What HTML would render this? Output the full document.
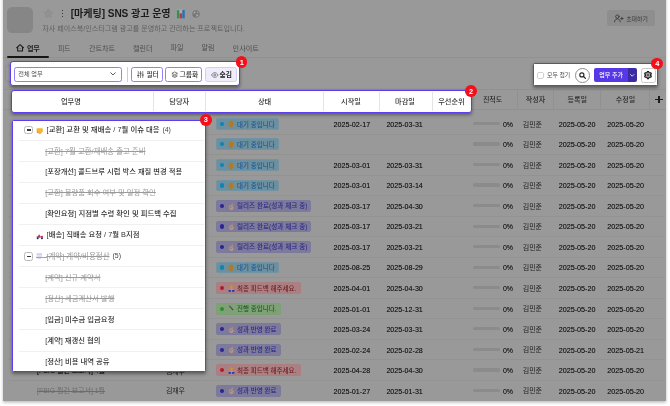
<!DOCTYPE html>
<html lang="ko"><head><meta charset="utf-8"><title>SNS 광고 운영</title><style>
html,body{margin:0;padding:0;background:#fff;}
body{width:670px;height:406px;overflow:hidden;position:relative;font-family:"Liberation Sans","Noto Sans CJK KR",sans-serif;font-size:7.2px;color:#222;-webkit-text-size-adjust:none;}
.t{position:absolute;white-space:nowrap;line-height:1;}
svg{display:block;overflow:visible;}
#root{position:absolute;left:0;top:0;width:670px;height:406px;will-change:transform;}
</style></head><body>
<div id="root">
<div class="" style="position:absolute;left:2.60px;top:-6.00px;width:663.20px;height:406.70px;background:#999999;box-shadow:0 1.5px 3px rgba(0,0,0,.28);"></div>
<div class="" style="position:absolute;left:7.00px;top:7.00px;width:25.60px;height:25.50px;background:#868686;border-radius:5.5px;"></div>
<svg style="position:absolute;left:42.6px;top:7.6px" width="10.8" height="10.8" viewBox="0 0 24 24"><path d="M12 2.2l3 6.300 6.900.900-5.100 4.700 1.300 6.800L12 17.600 5.900 20.900l1.300-6.800-5.100-4.700 6.900-.900z" fill="#929292" stroke="#8b8b8b" stroke-width="1.600" stroke-linejoin="round"/></svg>
<div class="" style="position:absolute;left:61.50px;top:9.55px;width:1.90px;height:1.90px;background:#161616;border-radius:50%;"></div>
<div class="" style="position:absolute;left:61.50px;top:12.55px;width:1.90px;height:1.90px;background:#161616;border-radius:50%;"></div>
<div class="" style="position:absolute;left:61.50px;top:15.55px;width:1.90px;height:1.90px;background:#161616;border-radius:50%;"></div>
<span class="t" id="t1" style="top:8.81px;left:70.80px;font-size:10.09px;font-weight:700;letter-spacing:-0.064px;color:#1c1c1c;">[마케팅] SNS 광고 운영</span>
<svg style="position:absolute;left:176px;top:9px" width="9.6" height="9.9" viewBox="0 0 9.6 9.9"><rect x="0" y="0" width="9.6" height="9.9" rx="0.8" fill="#8e9aa0"/><rect x="0.5" y="0.5" width="8.6" height="8.9" fill="#a7adb0"/><rect x="0.8" y="1.2" width="2.5" height="8.2" fill="#3f8a50"/><rect x="3.6" y="4.4" width="2.4" height="5" fill="#b53a3a"/><rect x="6.3" y="0.9" width="2.5" height="8.500" fill="#2f6fae"/></svg>
<svg style="position:absolute;left:192px;top:9.700px" width="8" height="8" viewBox="0 0 8 8"><circle cx="4" cy="4" r="3.700" fill="#757575"/><path d="M2.200 1.500c1.200-.300 1.800.500 1.500 1.300-.300.900-1.500.700-1.900 1.600-.300-1.100-.300-2.200.400-2.900zM4.300 4.300c.900-.400 2 .100 2.300 1-.400.900-1.200 1.500-2.100 1.700-.600-.800-.800-1.900-.200-2.700zM5 1.200c.900.300 1.600 1 1.900 1.900-.700.200-1.500-.100-1.900-.700-.300-.400-.300-.800 0-1.200z" fill="#a2a2a2"/></svg>
<span class="t" id="t2" style="top:25.91px;left:42.30px;font-size:7.08px;font-weight:400;color:#606060;">자사 페이스북/인스타그램 광고를 운영하고 관리하는 프로젝트입니다.</span>
<div class="" style="position:absolute;left:607.00px;top:10.40px;width:47.80px;height:16.00px;background:#8e8e8e;border-radius:2.5px;"></div>
<svg style="position:absolute;left:613.600px;top:14px" width="9.600" height="8.600" viewBox="0 0 20 18" fill="none" stroke="#3a3a3a" stroke-width="1.900" stroke-linecap="round"><circle cx="7" cy="5.5" r="3.6"/><path d="M1 16.5c0-4 2.6-6 6-6s6 2 6 6"/><path d="M16.5 7v5M14 9.5h5"/></svg>
<span class="t" id="t3" style="top:17.09px;left:626.20px;font-size:5.92px;font-weight:400;color:#3a3a3a;">초대하기</span>
<svg style="position:absolute;left:16.100px;top:43.900px" width="8.200" height="7.700" viewBox="0 0 16 15" fill="none" stroke="#1a1a1a" stroke-width="2.100" stroke-linejoin="round" stroke-linecap="round"><path d="M1.200 7.400L8 1.300l6.800 6.100"/><path d="M3.300 6.200v7.600h9.400V6.200"/><circle cx="8" cy="9.300" r="0.900" fill="#1a1a1a" stroke="none"/></svg>
<span class="t" id="t4" style="top:46.21px;left:26.90px;font-size:7.08px;font-weight:700;letter-spacing:-0.067px;color:#1c1c1c;">업무</span>
<span class="t" id="t5" style="top:44.51px;left:58.10px;font-size:6.98px;font-weight:400;letter-spacing:-0.419px;color:#4e4e4e;">피드</span>
<span class="t" id="t6" style="top:46.21px;left:89.00px;font-size:7.08px;font-weight:400;color:#4e4e4e;">간트차트</span>
<span class="t" id="t7" style="top:46.21px;left:133.00px;font-size:7.08px;font-weight:400;color:#4e4e4e;">캘린더</span>
<span class="t" id="t8" style="top:44.46px;left:170.60px;font-size:7.07px;font-weight:400;color:#4e4e4e;">파일</span>
<span class="t" id="t9" style="top:44.46px;left:201.60px;font-size:7.07px;font-weight:400;color:#4e4e4e;">알림</span>
<span class="t" id="t10" style="top:46.18px;left:232.60px;font-size:7.13px;font-weight:400;color:#4e4e4e;">인사이트</span>
<div class="" style="position:absolute;left:3.00px;top:57.00px;width:662.50px;height:0.80px;background:#919191;"></div>
<div class="" style="position:absolute;left:7.20px;top:56.20px;width:41.50px;height:1.70px;background:#161616;border-radius:1px;"></div>
<div class="" style="position:absolute;left:3.00px;top:88.70px;width:662.50px;height:0.80px;background:#919191;"></div>
<div class="" style="position:absolute;left:3.00px;top:108.80px;width:662.50px;height:0.80px;background:#919191;"></div>
<div class="" style="position:absolute;left:517.40px;top:89.10px;width:0.80px;height:20.00px;background:#919191;"></div>
<div class="" style="position:absolute;left:553.40px;top:89.10px;width:0.80px;height:20.00px;background:#919191;"></div>
<div class="" style="position:absolute;left:600.40px;top:89.10px;width:0.80px;height:20.00px;background:#919191;"></div>
<div class="" style="position:absolute;left:649.20px;top:89.10px;width:0.80px;height:20.00px;background:#919191;"></div>
<span class="t" id="t11" style="top:96.08px;left:482.90px;font-size:7.04px;font-weight:500;color:#2a2a2a;">진척도</span>
<span class="t" id="t12" style="top:97.06px;left:525.80px;font-size:7.08px;font-weight:500;color:#2a2a2a;">작성자</span>
<span class="t" id="t13" style="top:97.06px;left:567.50px;font-size:7.08px;font-weight:500;color:#2a2a2a;">등록일</span>
<span class="t" id="t14" style="top:96.10px;left:615.80px;font-size:7.00px;font-weight:500;color:#2a2a2a;">수정일</span>
<div class="" style="position:absolute;left:655.40px;top:98.90px;width:7.20px;height:1.20px;background:#1c1c1c;"></div>
<div class="" style="position:absolute;left:658.40px;top:95.90px;width:1.20px;height:7.20px;background:#1c1c1c;"></div>
<div class="" style="position:absolute;left:8.50px;top:133.53px;width:656.00px;height:0.80px;background:#929292;"></div>
<div class="" style="position:absolute;left:8.50px;top:154.06px;width:656.00px;height:0.80px;background:#929292;"></div>
<div class="" style="position:absolute;left:8.50px;top:174.59px;width:656.00px;height:0.80px;background:#929292;"></div>
<div class="" style="position:absolute;left:8.50px;top:195.12px;width:656.00px;height:0.80px;background:#929292;"></div>
<div class="" style="position:absolute;left:8.50px;top:215.65px;width:656.00px;height:0.80px;background:#929292;"></div>
<div class="" style="position:absolute;left:8.50px;top:236.18px;width:656.00px;height:0.80px;background:#929292;"></div>
<div class="" style="position:absolute;left:8.50px;top:256.71px;width:656.00px;height:0.80px;background:#929292;"></div>
<div class="" style="position:absolute;left:8.50px;top:277.24px;width:656.00px;height:0.80px;background:#929292;"></div>
<div class="" style="position:absolute;left:8.50px;top:297.77px;width:656.00px;height:0.80px;background:#929292;"></div>
<div class="" style="position:absolute;left:8.50px;top:318.30px;width:656.00px;height:0.80px;background:#929292;"></div>
<div class="" style="position:absolute;left:8.50px;top:338.83px;width:656.00px;height:0.80px;background:#929292;"></div>
<div class="" style="position:absolute;left:8.50px;top:359.36px;width:656.00px;height:0.80px;background:#929292;"></div>
<div class="" style="position:absolute;left:8.50px;top:379.89px;width:656.00px;height:0.80px;background:#929292;"></div>
<div class="" style="position:absolute;left:215.90px;top:117.95px;width:63.20px;height:11.80px;box-sizing:border-box;background:#6e8f9e;border:0.6px solid #7194a5;border-radius:2px;"></div>
<div class="" style="position:absolute;left:219.90px;top:121.75px;width:4.20px;height:4.20px;background:#0b84b6;border-radius:50%;"></div>
<svg style="position:absolute;left:227.80px;top:120.45px" width="6" height="7.4" viewBox="0 0 12 15"><path d="M2 6.5V3.2a1 1 0 0 1 2 0V2a1 1 0 0 1 2 0v-.3a1 1 0 0 1 2 0V2.6a1 1 0 0 1 2 0V9c0 3.4-1.8 5.6-4.6 5.6C3.4 14.600 2.600 13 1.400 10.400L.5 8.400c-.4-1 .7-1.600 1.500-.9z" fill="#b27a22"/></svg>
<span class="t" id="t15" style="top:122.05px;left:237.00px;font-size:6.49px;font-weight:500;color:#1d5a94;">대기 중입니다</span>
<span class="t" id="t16" style="top:120.90px;left:333.40px;font-size:7.20px;font-weight:400;color:#181818;text-shadow:0 0 0.6px rgba(20,20,20,.55);">2025-02-17</span>
<span class="t" id="t17" style="top:121.94px;left:386.40px;font-size:7.13px;font-weight:400;color:#181818;text-shadow:0 0 0.6px rgba(20,20,20,.55);">2025-03-31</span>
<div class="" style="position:absolute;left:472.90px;top:121.90px;width:27.50px;height:3.30px;background:#8b8b8b;border-radius:1.65px;"></div>
<span class="t" id="t18" style="top:121.01px;left:503.00px;font-size:6.98px;font-weight:400;letter-spacing:-0.139px;color:#181818;text-shadow:0 0 0.6px rgba(20,20,20,.55);">0%</span>
<span class="t" id="t19" style="top:120.78px;left:522.70px;font-size:7.04px;font-weight:400;color:#1e1e1e;">김민준</span>
<span class="t" id="t20" style="top:120.90px;left:558.70px;font-size:7.20px;font-weight:400;color:#181818;text-shadow:0 0 0.6px rgba(20,20,20,.55);">2025-05-20</span>
<span class="t" id="t21" style="top:120.90px;left:607.30px;font-size:7.20px;font-weight:400;color:#181818;text-shadow:0 0 0.6px rgba(20,20,20,.55);">2025-05-20</span>
<div class="" style="position:absolute;left:215.90px;top:138.48px;width:63.20px;height:11.80px;box-sizing:border-box;background:#6e8f9e;border:0.6px solid #7194a5;border-radius:2px;"></div>
<div class="" style="position:absolute;left:219.90px;top:142.28px;width:4.20px;height:4.20px;background:#0b84b6;border-radius:50%;"></div>
<svg style="position:absolute;left:227.80px;top:140.98px" width="6" height="7.4" viewBox="0 0 12 15"><path d="M2 6.5V3.2a1 1 0 0 1 2 0V2a1 1 0 0 1 2 0v-.3a1 1 0 0 1 2 0V2.6a1 1 0 0 1 2 0V9c0 3.4-1.8 5.6-4.6 5.6C3.4 14.600 2.600 13 1.400 10.400L.5 8.400c-.4-1 .7-1.600 1.500-.9z" fill="#b27a22"/></svg>
<span class="t" id="t22" style="top:142.08px;left:237.00px;font-size:6.49px;font-weight:500;color:#1d5a94;">대기 중입니다</span>
<div class="" style="position:absolute;left:472.90px;top:142.43px;width:27.50px;height:3.30px;background:#8b8b8b;border-radius:1.65px;"></div>
<span class="t" id="t23" style="top:141.04px;left:503.00px;font-size:6.98px;font-weight:400;letter-spacing:-0.139px;color:#181818;text-shadow:0 0 0.6px rgba(20,20,20,.55);">0%</span>
<span class="t" id="t24" style="top:141.06px;left:522.70px;font-size:7.04px;font-weight:400;color:#1e1e1e;">김민준</span>
<span class="t" id="t25" style="top:141.18px;left:558.70px;font-size:7.20px;font-weight:400;color:#181818;text-shadow:0 0 0.6px rgba(20,20,20,.55);">2025-05-20</span>
<span class="t" id="t26" style="top:141.18px;left:607.30px;font-size:7.20px;font-weight:400;color:#181818;text-shadow:0 0 0.6px rgba(20,20,20,.55);">2025-05-20</span>
<div class="" style="position:absolute;left:215.90px;top:159.01px;width:63.20px;height:11.80px;box-sizing:border-box;background:#6e8f9e;border:0.6px solid #7194a5;border-radius:2px;"></div>
<div class="" style="position:absolute;left:219.90px;top:162.81px;width:4.20px;height:4.20px;background:#0b84b6;border-radius:50%;"></div>
<svg style="position:absolute;left:227.80px;top:161.51px" width="6" height="7.4" viewBox="0 0 12 15"><path d="M2 6.5V3.2a1 1 0 0 1 2 0V2a1 1 0 0 1 2 0v-.3a1 1 0 0 1 2 0V2.6a1 1 0 0 1 2 0V9c0 3.4-1.8 5.6-4.6 5.6C3.4 14.600 2.600 13 1.400 10.400L.5 8.400c-.4-1 .7-1.600 1.500-.9z" fill="#b27a22"/></svg>
<span class="t" id="t27" style="top:163.11px;left:237.00px;font-size:6.49px;font-weight:500;color:#1d5a94;">대기 중입니다</span>
<span class="t" id="t28" style="top:161.96px;left:333.40px;font-size:7.20px;font-weight:400;color:#181818;text-shadow:0 0 0.6px rgba(20,20,20,.55);">2025-03-01</span>
<span class="t" id="t29" style="top:163.00px;left:386.40px;font-size:7.13px;font-weight:400;color:#181818;text-shadow:0 0 0.6px rgba(20,20,20,.55);">2025-03-31</span>
<div class="" style="position:absolute;left:472.90px;top:162.96px;width:27.50px;height:3.30px;background:#8b8b8b;border-radius:1.65px;"></div>
<span class="t" id="t30" style="top:162.07px;left:503.00px;font-size:6.98px;font-weight:400;letter-spacing:-0.139px;color:#181818;text-shadow:0 0 0.6px rgba(20,20,20,.55);">0%</span>
<span class="t" id="t31" style="top:161.84px;left:522.70px;font-size:7.04px;font-weight:400;color:#1e1e1e;">김민준</span>
<span class="t" id="t32" style="top:161.96px;left:558.70px;font-size:7.20px;font-weight:400;color:#181818;text-shadow:0 0 0.6px rgba(20,20,20,.55);">2025-05-20</span>
<span class="t" id="t33" style="top:161.96px;left:607.30px;font-size:7.20px;font-weight:400;color:#181818;text-shadow:0 0 0.6px rgba(20,20,20,.55);">2025-05-20</span>
<div class="" style="position:absolute;left:215.90px;top:179.54px;width:63.20px;height:11.80px;box-sizing:border-box;background:#6e8f9e;border:0.6px solid #7194a5;border-radius:2px;"></div>
<div class="" style="position:absolute;left:219.90px;top:183.34px;width:4.20px;height:4.20px;background:#0b84b6;border-radius:50%;"></div>
<svg style="position:absolute;left:227.80px;top:182.04px" width="6" height="7.4" viewBox="0 0 12 15"><path d="M2 6.5V3.2a1 1 0 0 1 2 0V2a1 1 0 0 1 2 0v-.3a1 1 0 0 1 2 0V2.6a1 1 0 0 1 2 0V9c0 3.4-1.8 5.6-4.6 5.6C3.4 14.600 2.600 13 1.400 10.400L.5 8.400c-.4-1 .7-1.600 1.500-.9z" fill="#b27a22"/></svg>
<span class="t" id="t34" style="top:183.14px;left:237.00px;font-size:6.49px;font-weight:500;color:#1d5a94;">대기 중입니다</span>
<span class="t" id="t35" style="top:182.24px;left:333.40px;font-size:7.20px;font-weight:400;color:#181818;text-shadow:0 0 0.6px rgba(20,20,20,.55);">2025-03-01</span>
<span class="t" id="t36" style="top:183.03px;left:386.40px;font-size:7.13px;font-weight:400;color:#181818;text-shadow:0 0 0.6px rgba(20,20,20,.55);">2025-03-14</span>
<div class="" style="position:absolute;left:472.90px;top:183.49px;width:27.50px;height:3.30px;background:#8b8b8b;border-radius:1.65px;"></div>
<span class="t" id="t37" style="top:182.10px;left:503.00px;font-size:6.98px;font-weight:400;letter-spacing:-0.139px;color:#181818;text-shadow:0 0 0.6px rgba(20,20,20,.55);">0%</span>
<span class="t" id="t38" style="top:182.12px;left:522.70px;font-size:7.04px;font-weight:400;color:#1e1e1e;">김민준</span>
<span class="t" id="t39" style="top:182.24px;left:558.70px;font-size:7.20px;font-weight:400;color:#181818;text-shadow:0 0 0.6px rgba(20,20,20,.55);">2025-05-20</span>
<span class="t" id="t40" style="top:182.24px;left:607.30px;font-size:7.20px;font-weight:400;color:#181818;text-shadow:0 0 0.6px rgba(20,20,20,.55);">2025-05-20</span>
<div class="" style="position:absolute;left:215.90px;top:200.07px;width:95.10px;height:11.80px;box-sizing:border-box;background:#7d7a9a;border:0.6px solid #7c799e;border-radius:2px;"></div>
<div class="" style="position:absolute;left:219.90px;top:203.87px;width:4.20px;height:4.20px;background:#2a2494;border-radius:50%;"></div>
<svg style="position:absolute;left:227.80px;top:202.57px" width="6" height="7.4" viewBox="0 0 12 15"><path d="M3 5.500c1.500-1.200 3-1 3.800.2L7.500 1.500a.9.900 0 0 1 1.800.1l.2 5.400c1.600.4 2.200 1.600 2 3.400-.3 2.600-2 4.200-4.500 4.200-2.700 0-4.600-1.800-5-4.300C1.600 8 1.900 6.500 3 5.500z" fill="#b8917c"/><circle cx="5.300" cy="8.600" r="1.700" fill="#7d7a9a"/></svg>
<span class="t" id="t41" style="top:203.12px;left:237.00px;font-size:6.59px;font-weight:500;color:#2d2987;">릴리즈 완료(성과 체크 중)</span>
<span class="t" id="t42" style="top:203.02px;left:333.40px;font-size:7.20px;font-weight:400;color:#181818;text-shadow:0 0 0.6px rgba(20,20,20,.55);">2025-03-17</span>
<span class="t" id="t43" style="top:204.06px;left:386.40px;font-size:7.13px;font-weight:400;color:#181818;text-shadow:0 0 0.6px rgba(20,20,20,.55);">2025-04-30</span>
<div class="" style="position:absolute;left:472.90px;top:204.02px;width:27.50px;height:3.30px;background:#8b8b8b;border-radius:1.65px;"></div>
<span class="t" id="t44" style="top:203.13px;left:503.00px;font-size:6.98px;font-weight:400;letter-spacing:-0.139px;color:#181818;text-shadow:0 0 0.6px rgba(20,20,20,.55);">0%</span>
<span class="t" id="t45" style="top:202.90px;left:522.70px;font-size:7.04px;font-weight:400;color:#1e1e1e;">김민준</span>
<span class="t" id="t46" style="top:203.02px;left:558.70px;font-size:7.20px;font-weight:400;color:#181818;text-shadow:0 0 0.6px rgba(20,20,20,.55);">2025-05-20</span>
<span class="t" id="t47" style="top:203.02px;left:607.30px;font-size:7.20px;font-weight:400;color:#181818;text-shadow:0 0 0.6px rgba(20,20,20,.55);">2025-05-20</span>
<div class="" style="position:absolute;left:215.90px;top:220.60px;width:95.10px;height:11.80px;box-sizing:border-box;background:#7d7a9a;border:0.6px solid #7c799e;border-radius:2px;"></div>
<div class="" style="position:absolute;left:219.90px;top:224.40px;width:4.20px;height:4.20px;background:#2a2494;border-radius:50%;"></div>
<svg style="position:absolute;left:227.80px;top:223.10px" width="6" height="7.4" viewBox="0 0 12 15"><path d="M3 5.500c1.500-1.200 3-1 3.800.2L7.500 1.500a.9.900 0 0 1 1.800.1l.2 5.400c1.600.4 2.200 1.600 2 3.400-.3 2.600-2 4.200-4.500 4.200-2.700 0-4.600-1.800-5-4.300C1.600 8 1.900 6.500 3 5.500z" fill="#b8917c"/><circle cx="5.300" cy="8.600" r="1.700" fill="#7d7a9a"/></svg>
<span class="t" id="t48" style="top:224.15px;left:237.00px;font-size:6.59px;font-weight:500;color:#2d2987;">릴리즈 완료(성과 체크 중)</span>
<span class="t" id="t49" style="top:223.05px;left:333.40px;font-size:7.20px;font-weight:400;color:#181818;text-shadow:0 0 0.6px rgba(20,20,20,.55);">2025-03-17</span>
<span class="t" id="t50" style="top:224.09px;left:386.40px;font-size:7.13px;font-weight:400;color:#181818;text-shadow:0 0 0.6px rgba(20,20,20,.55);">2025-03-21</span>
<div class="" style="position:absolute;left:472.90px;top:224.55px;width:27.50px;height:3.30px;background:#8b8b8b;border-radius:1.65px;"></div>
<span class="t" id="t51" style="top:223.16px;left:503.00px;font-size:6.98px;font-weight:400;letter-spacing:-0.139px;color:#181818;text-shadow:0 0 0.6px rgba(20,20,20,.55);">0%</span>
<span class="t" id="t52" style="top:223.18px;left:522.70px;font-size:7.04px;font-weight:400;color:#1e1e1e;">김민준</span>
<span class="t" id="t53" style="top:223.05px;left:558.70px;font-size:7.20px;font-weight:400;color:#181818;text-shadow:0 0 0.6px rgba(20,20,20,.55);">2025-05-20</span>
<span class="t" id="t54" style="top:223.05px;left:607.30px;font-size:7.20px;font-weight:400;color:#181818;text-shadow:0 0 0.6px rgba(20,20,20,.55);">2025-05-20</span>
<div class="" style="position:absolute;left:215.90px;top:241.13px;width:95.10px;height:11.80px;box-sizing:border-box;background:#7d7a9a;border:0.6px solid #7c799e;border-radius:2px;"></div>
<div class="" style="position:absolute;left:219.90px;top:244.93px;width:4.20px;height:4.20px;background:#2a2494;border-radius:50%;"></div>
<svg style="position:absolute;left:227.80px;top:243.63px" width="6" height="7.4" viewBox="0 0 12 15"><path d="M3 5.500c1.500-1.200 3-1 3.800.2L7.500 1.500a.9.900 0 0 1 1.800.1l.2 5.400c1.600.4 2.200 1.600 2 3.400-.3 2.600-2 4.200-4.500 4.200-2.700 0-4.600-1.800-5-4.300C1.600 8 1.900 6.500 3 5.500z" fill="#b8917c"/><circle cx="5.300" cy="8.600" r="1.700" fill="#7d7a9a"/></svg>
<span class="t" id="t55" style="top:244.18px;left:237.00px;font-size:6.59px;font-weight:500;color:#2d2987;">릴리즈 완료(성과 체크 중)</span>
<span class="t" id="t56" style="top:244.08px;left:333.40px;font-size:7.20px;font-weight:400;color:#181818;text-shadow:0 0 0.6px rgba(20,20,20,.55);">2025-03-17</span>
<span class="t" id="t57" style="top:245.12px;left:386.40px;font-size:7.13px;font-weight:400;color:#181818;text-shadow:0 0 0.6px rgba(20,20,20,.55);">2025-03-21</span>
<div class="" style="position:absolute;left:472.90px;top:245.08px;width:27.50px;height:3.30px;background:#8b8b8b;border-radius:1.65px;"></div>
<span class="t" id="t58" style="top:244.19px;left:503.00px;font-size:6.98px;font-weight:400;letter-spacing:-0.139px;color:#181818;text-shadow:0 0 0.6px rgba(20,20,20,.55);">0%</span>
<span class="t" id="t59" style="top:243.96px;left:522.70px;font-size:7.04px;font-weight:400;color:#1e1e1e;">김민준</span>
<span class="t" id="t60" style="top:244.08px;left:558.70px;font-size:7.20px;font-weight:400;color:#181818;text-shadow:0 0 0.6px rgba(20,20,20,.55);">2025-05-20</span>
<span class="t" id="t61" style="top:244.08px;left:607.30px;font-size:7.20px;font-weight:400;color:#181818;text-shadow:0 0 0.6px rgba(20,20,20,.55);">2025-05-20</span>
<div class="" style="position:absolute;left:215.90px;top:261.66px;width:63.20px;height:11.80px;box-sizing:border-box;background:#6e8f9e;border:0.6px solid #7194a5;border-radius:2px;"></div>
<div class="" style="position:absolute;left:219.90px;top:265.46px;width:4.20px;height:4.20px;background:#0b84b6;border-radius:50%;"></div>
<svg style="position:absolute;left:227.80px;top:264.16px" width="6" height="7.4" viewBox="0 0 12 15"><path d="M2 6.5V3.2a1 1 0 0 1 2 0V2a1 1 0 0 1 2 0v-.3a1 1 0 0 1 2 0V2.6a1 1 0 0 1 2 0V9c0 3.4-1.8 5.6-4.6 5.6C3.4 14.600 2.600 13 1.400 10.400L.5 8.400c-.4-1 .7-1.600 1.500-.9z" fill="#b27a22"/></svg>
<span class="t" id="t62" style="top:264.76px;left:237.00px;font-size:6.49px;font-weight:500;color:#1d5a94;">대기 중입니다</span>
<span class="t" id="t63" style="top:264.11px;left:333.40px;font-size:7.20px;font-weight:400;color:#181818;text-shadow:0 0 0.6px rgba(20,20,20,.55);">2025-08-25</span>
<span class="t" id="t64" style="top:265.15px;left:386.40px;font-size:7.13px;font-weight:400;color:#181818;text-shadow:0 0 0.6px rgba(20,20,20,.55);">2025-08-29</span>
<div class="" style="position:absolute;left:472.90px;top:265.61px;width:27.50px;height:3.30px;background:#8b8b8b;border-radius:1.65px;"></div>
<span class="t" id="t65" style="top:264.22px;left:503.00px;font-size:6.98px;font-weight:400;letter-spacing:-0.139px;color:#181818;text-shadow:0 0 0.6px rgba(20,20,20,.55);">0%</span>
<span class="t" id="t66" style="top:264.24px;left:522.70px;font-size:7.04px;font-weight:400;color:#1e1e1e;">김민준</span>
<span class="t" id="t67" style="top:264.11px;left:558.70px;font-size:7.20px;font-weight:400;color:#181818;text-shadow:0 0 0.6px rgba(20,20,20,.55);">2025-05-20</span>
<span class="t" id="t68" style="top:264.11px;left:607.30px;font-size:7.20px;font-weight:400;color:#181818;text-shadow:0 0 0.6px rgba(20,20,20,.55);">2025-05-20</span>
<div class="" style="position:absolute;left:215.90px;top:282.19px;width:84.80px;height:11.80px;box-sizing:border-box;background:#ab8083;border:0.6px solid #ad7e81;border-radius:2px;"></div>
<div class="" style="position:absolute;left:219.90px;top:285.99px;width:4.20px;height:4.20px;background:#b8162a;border-radius:50%;"></div>
<svg style="position:absolute;left:227.80px;top:284.89px" width="7" height="7" viewBox="0 0 14 14"><circle cx="7" cy="3.400" r="2.400" fill="#d09a22"/><path d="M3.500 10.500c0-2.600 1.500-4 3.500-4s3.500 1.400 3.500 4z" fill="#d09a22"/><rect x="1" y="10" width="5" height="3.400" rx="1" fill="#2433c0"/><rect x="8" y="10" width="5" height="3.400" rx="1" fill="#2433c0"/></svg>
<span class="t" id="t69" style="top:286.02px;left:237.00px;font-size:6.53px;font-weight:500;color:#6c1f22;">최종 피드백 해주세요.</span>
<span class="t" id="t70" style="top:285.14px;left:333.40px;font-size:7.20px;font-weight:400;color:#181818;text-shadow:0 0 0.6px rgba(20,20,20,.55);">2025-04-01</span>
<span class="t" id="t71" style="top:286.18px;left:386.40px;font-size:7.13px;font-weight:400;color:#181818;text-shadow:0 0 0.6px rgba(20,20,20,.55);">2025-04-30</span>
<div class="" style="position:absolute;left:472.90px;top:286.14px;width:27.50px;height:3.30px;background:#8b8b8b;border-radius:1.65px;"></div>
<span class="t" id="t72" style="top:285.00px;left:503.00px;font-size:6.98px;font-weight:400;letter-spacing:-0.139px;color:#181818;text-shadow:0 0 0.6px rgba(20,20,20,.55);">0%</span>
<span class="t" id="t73" style="top:285.02px;left:522.70px;font-size:7.04px;font-weight:400;color:#1e1e1e;">김민준</span>
<span class="t" id="t74" style="top:285.14px;left:558.70px;font-size:7.20px;font-weight:400;color:#181818;text-shadow:0 0 0.6px rgba(20,20,20,.55);">2025-05-20</span>
<span class="t" id="t75" style="top:285.14px;left:607.30px;font-size:7.20px;font-weight:400;color:#181818;text-shadow:0 0 0.6px rgba(20,20,20,.55);">2025-05-20</span>
<div class="" style="position:absolute;left:215.90px;top:302.72px;width:65.00px;height:11.80px;box-sizing:border-box;background:#80a077;border:0.6px solid #7ea174;border-radius:2px;"></div>
<div class="" style="position:absolute;left:219.90px;top:306.52px;width:4.20px;height:4.20px;background:#2c8a31;border-radius:50%;"></div>
<svg style="position:absolute;left:227.80px;top:305.42px" width="7" height="7" viewBox="0 0 14 14"><path d="M2 2.500l2-1 7.500 8.500-1.500 1.500z" fill="#4a4a4a"/><path d="M10 11.500l1.500-1.500 1.500 3z" fill="#c9a27a"/><circle cx="3" cy="3" r="1.800" fill="#6d6d6d"/></svg>
<span class="t" id="t76" style="top:305.82px;left:237.00px;font-size:6.51px;font-weight:500;color:#1f5e25;">진행 중입니다.</span>
<span class="t" id="t77" style="top:306.17px;left:333.40px;font-size:7.20px;font-weight:400;color:#181818;text-shadow:0 0 0.6px rgba(20,20,20,.55);">2025-01-01</span>
<span class="t" id="t78" style="top:307.21px;left:386.40px;font-size:7.13px;font-weight:400;color:#181818;text-shadow:0 0 0.6px rgba(20,20,20,.55);">2025-12-31</span>
<div class="" style="position:absolute;left:472.90px;top:306.67px;width:27.50px;height:3.30px;background:#8b8b8b;border-radius:1.65px;"></div>
<span class="t" id="t79" style="top:305.78px;left:503.00px;font-size:6.98px;font-weight:400;letter-spacing:-0.139px;color:#181818;text-shadow:0 0 0.6px rgba(20,20,20,.55);">0%</span>
<span class="t" id="t80" style="top:305.05px;left:522.70px;font-size:7.04px;font-weight:400;color:#1e1e1e;">김민준</span>
<span class="t" id="t81" style="top:306.17px;left:558.70px;font-size:7.20px;font-weight:400;color:#181818;text-shadow:0 0 0.6px rgba(20,20,20,.55);">2025-05-20</span>
<span class="t" id="t82" style="top:306.17px;left:607.30px;font-size:7.20px;font-weight:400;color:#181818;text-shadow:0 0 0.6px rgba(20,20,20,.55);">2025-05-20</span>
<div class="" style="position:absolute;left:215.90px;top:323.25px;width:65.00px;height:11.80px;box-sizing:border-box;background:#7d7a9a;border:0.6px solid #7c799e;border-radius:2px;"></div>
<div class="" style="position:absolute;left:219.90px;top:327.05px;width:4.20px;height:4.20px;background:#2a2494;border-radius:50%;"></div>
<svg style="position:absolute;left:227.80px;top:325.75px" width="6" height="7.4" viewBox="0 0 12 15"><path d="M3 5.500c1.500-1.200 3-1 3.800.2L7.500 1.500a.9.900 0 0 1 1.800.1l.2 5.400c1.600.4 2.200 1.600 2 3.400-.3 2.600-2 4.200-4.500 4.200-2.700 0-4.600-1.800-5-4.300C1.600 8 1.900 6.500 3 5.500z" fill="#b8917c"/><circle cx="5.300" cy="8.600" r="1.700" fill="#7d7a9a"/></svg>
<span class="t" id="t83" style="top:327.10px;left:237.00px;font-size:6.51px;font-weight:500;color:#2d2987;">성과 반영 완료</span>
<span class="t" id="t84" style="top:326.20px;left:333.40px;font-size:7.20px;font-weight:400;color:#181818;text-shadow:0 0 0.6px rgba(20,20,20,.55);">2025-03-24</span>
<span class="t" id="t85" style="top:327.24px;left:386.40px;font-size:7.13px;font-weight:400;color:#181818;text-shadow:0 0 0.6px rgba(20,20,20,.55);">2025-03-31</span>
<div class="" style="position:absolute;left:472.90px;top:327.20px;width:27.50px;height:3.30px;background:#8b8b8b;border-radius:1.65px;"></div>
<span class="t" id="t86" style="top:326.06px;left:503.00px;font-size:6.98px;font-weight:400;letter-spacing:-0.139px;color:#181818;text-shadow:0 0 0.6px rgba(20,20,20,.55);">0%</span>
<span class="t" id="t87" style="top:326.08px;left:522.70px;font-size:7.04px;font-weight:400;color:#1e1e1e;">김민준</span>
<span class="t" id="t88" style="top:326.20px;left:558.70px;font-size:7.20px;font-weight:400;color:#181818;text-shadow:0 0 0.6px rgba(20,20,20,.55);">2025-05-20</span>
<span class="t" id="t89" style="top:326.20px;left:607.30px;font-size:7.20px;font-weight:400;color:#181818;text-shadow:0 0 0.6px rgba(20,20,20,.55);">2025-05-20</span>
<div class="" style="position:absolute;left:215.90px;top:343.78px;width:65.00px;height:11.80px;box-sizing:border-box;background:#7d7a9a;border:0.6px solid #7c799e;border-radius:2px;"></div>
<div class="" style="position:absolute;left:219.90px;top:347.58px;width:4.20px;height:4.20px;background:#2a2494;border-radius:50%;"></div>
<svg style="position:absolute;left:227.80px;top:346.28px" width="6" height="7.4" viewBox="0 0 12 15"><path d="M3 5.500c1.500-1.200 3-1 3.800.2L7.500 1.500a.9.900 0 0 1 1.800.1l.2 5.400c1.600.4 2.200 1.600 2 3.400-.3 2.600-2 4.200-4.500 4.200-2.700 0-4.600-1.800-5-4.300C1.600 8 1.900 6.500 3 5.500z" fill="#b8917c"/><circle cx="5.300" cy="8.600" r="1.700" fill="#7d7a9a"/></svg>
<span class="t" id="t90" style="top:346.88px;left:237.00px;font-size:6.51px;font-weight:500;color:#2d2987;">성과 반영 완료</span>
<span class="t" id="t91" style="top:347.23px;left:333.40px;font-size:7.20px;font-weight:400;color:#181818;text-shadow:0 0 0.6px rgba(20,20,20,.55);">2025-02-24</span>
<span class="t" id="t92" style="top:347.77px;left:386.40px;font-size:7.13px;font-weight:400;color:#181818;text-shadow:0 0 0.6px rgba(20,20,20,.55);">2025-02-28</span>
<div class="" style="position:absolute;left:472.90px;top:347.73px;width:27.50px;height:3.30px;background:#8b8b8b;border-radius:1.65px;"></div>
<span class="t" id="t93" style="top:346.84px;left:503.00px;font-size:6.98px;font-weight:400;letter-spacing:-0.139px;color:#181818;text-shadow:0 0 0.6px rgba(20,20,20,.55);">0%</span>
<span class="t" id="t94" style="top:346.11px;left:522.70px;font-size:7.04px;font-weight:400;color:#1e1e1e;">김민준</span>
<span class="t" id="t95" style="top:347.23px;left:558.70px;font-size:7.20px;font-weight:400;color:#181818;text-shadow:0 0 0.6px rgba(20,20,20,.55);">2025-05-20</span>
<span class="t" id="t96" style="top:347.23px;left:607.30px;font-size:7.20px;font-weight:400;color:#181818;text-shadow:0 0 0.6px rgba(20,20,20,.55);">2025-05-21</span>
<div class="" style="position:absolute;left:215.90px;top:364.31px;width:84.80px;height:11.80px;box-sizing:border-box;background:#ab8083;border:0.6px solid #ad7e81;border-radius:2px;"></div>
<div class="" style="position:absolute;left:219.90px;top:368.11px;width:4.20px;height:4.20px;background:#b8162a;border-radius:50%;"></div>
<svg style="position:absolute;left:227.80px;top:367.01px" width="7" height="7" viewBox="0 0 14 14"><circle cx="7" cy="3.400" r="2.400" fill="#d09a22"/><path d="M3.500 10.500c0-2.600 1.500-4 3.500-4s3.500 1.400 3.500 4z" fill="#d09a22"/><rect x="1" y="10" width="5" height="3.400" rx="1" fill="#2433c0"/><rect x="8" y="10" width="5" height="3.400" rx="1" fill="#2433c0"/></svg>
<span class="t" id="t97" style="top:368.14px;left:237.00px;font-size:6.53px;font-weight:500;color:#6c1f22;">최종 피드백 해주세요.</span>
<span class="t" id="t98" style="top:367.01px;left:333.40px;font-size:7.20px;font-weight:400;color:#181818;text-shadow:0 0 0.6px rgba(20,20,20,.55);">2025-04-28</span>
<span class="t" id="t99" style="top:368.05px;left:386.40px;font-size:7.13px;font-weight:400;color:#181818;text-shadow:0 0 0.6px rgba(20,20,20,.55);">2025-04-30</span>
<div class="" style="position:absolute;left:472.90px;top:368.26px;width:27.50px;height:3.30px;background:#8b8b8b;border-radius:1.65px;"></div>
<span class="t" id="t100" style="top:367.12px;left:503.00px;font-size:6.98px;font-weight:400;letter-spacing:-0.139px;color:#181818;text-shadow:0 0 0.6px rgba(20,20,20,.55);">0%</span>
<span class="t" id="t101" style="top:367.14px;left:522.70px;font-size:7.04px;font-weight:400;color:#1e1e1e;">김민준</span>
<span class="t" id="t102" style="top:367.01px;left:558.70px;font-size:7.20px;font-weight:400;color:#181818;text-shadow:0 0 0.6px rgba(20,20,20,.55);">2025-05-20</span>
<span class="t" id="t103" style="top:367.01px;left:607.30px;font-size:7.20px;font-weight:400;color:#181818;text-shadow:0 0 0.6px rgba(20,20,20,.55);">2025-05-20</span>
<div class="" style="position:absolute;left:215.90px;top:384.84px;width:65.00px;height:11.80px;box-sizing:border-box;background:#7d7a9a;border:0.6px solid #7c799e;border-radius:2px;"></div>
<div class="" style="position:absolute;left:219.90px;top:388.64px;width:4.20px;height:4.20px;background:#2a2494;border-radius:50%;"></div>
<svg style="position:absolute;left:227.80px;top:387.34px" width="6" height="7.4" viewBox="0 0 12 15"><path d="M3 5.500c1.500-1.200 3-1 3.800.2L7.500 1.500a.9.900 0 0 1 1.800.1l.2 5.400c1.600.4 2.200 1.600 2 3.400-.3 2.600-2 4.200-4.500 4.200-2.700 0-4.600-1.800-5-4.300C1.600 8 1.900 6.500 3 5.500z" fill="#b8917c"/><circle cx="5.300" cy="8.600" r="1.700" fill="#7d7a9a"/></svg>
<span class="t" id="t104" style="top:387.94px;left:237.00px;font-size:6.51px;font-weight:500;color:#2d2987;">성과 반영 완료</span>
<span class="t" id="t105" style="top:387.79px;left:333.40px;font-size:7.20px;font-weight:400;color:#181818;text-shadow:0 0 0.6px rgba(20,20,20,.55);">2025-01-27</span>
<span class="t" id="t106" style="top:388.83px;left:386.40px;font-size:7.13px;font-weight:400;color:#181818;text-shadow:0 0 0.6px rgba(20,20,20,.55);">2025-01-31</span>
<div class="" style="position:absolute;left:472.90px;top:388.79px;width:27.50px;height:3.30px;background:#8b8b8b;border-radius:1.65px;"></div>
<span class="t" id="t107" style="top:387.90px;left:503.00px;font-size:6.98px;font-weight:400;letter-spacing:-0.139px;color:#181818;text-shadow:0 0 0.6px rgba(20,20,20,.55);">0%</span>
<span class="t" id="t108" style="top:387.17px;left:522.70px;font-size:7.04px;font-weight:400;color:#1e1e1e;">김민준</span>
<span class="t" id="t109" style="top:387.79px;left:558.70px;font-size:7.20px;font-weight:400;color:#181818;text-shadow:0 0 0.6px rgba(20,20,20,.55);">2025-05-20</span>
<span class="t" id="t110" style="top:387.79px;left:607.30px;font-size:7.20px;font-weight:400;color:#181818;text-shadow:0 0 0.6px rgba(20,20,20,.55);">2025-05-20</span>
<span class="t" id="t111" style="top:366.87px;left:37.00px;font-size:6.98px;font-weight:500;letter-spacing:-0.020px;color:#181818;text-shadow:0 0 0.6px rgba(20,20,20,.55);">[FBIG 월간 보고서] 4월</span>
<span class="t" id="t112" style="top:367.87px;left:166.00px;font-size:6.98px;font-weight:400;letter-spacing:-0.216px;color:#1e1e1e;">김재우</span>
<span class="t" id="t113" style="top:387.20px;left:37.00px;font-size:6.98px;font-weight:400;letter-spacing:-0.020px;color:#6c6c6c;text-decoration:line-through;text-decoration-thickness:0.6px;">[FBIG 월간 보고서] 1월</span>
<span class="t" id="t114" style="top:387.20px;left:166.00px;font-size:6.98px;font-weight:400;letter-spacing:-0.216px;color:#1e1e1e;">김재우</span>
<div class="" style="position:absolute;left:4.70px;top:65.20px;width:20.00px;height:17.20px;box-sizing:border-box;background:#9b9b9b;border:0.8px solid #8f8f8f;border-radius:3px;"></div>
<div class="" style="position:absolute;left:10.00px;top:61.00px;width:230.40px;height:24.70px;box-sizing:border-box;background:#fff;border:1.4px solid #5a3ff0;border-radius:3.0px;box-shadow:0 1.5px 3.5px rgba(0,0,0,.4);"></div>
<div class="" style="position:absolute;left:14.10px;top:66.60px;width:108.40px;height:15.00px;box-sizing:border-box;background:#fff;border:1px solid #8f80f5;border-radius:2.5px;"></div>
<span class="t" id="t115" style="top:71.09px;left:18.20px;font-size:6.21px;font-weight:400;color:#505050;">전체 업무</span>
<svg style="position:absolute;left:109.6px;top:72.4px" width="6" height="4" viewBox="0 0 12 8" fill="none" stroke="#444" stroke-width="1.7" stroke-linecap="round" stroke-linejoin="round"><path d="M1.500 1.500L6 6l4.500-4.500"/></svg>
<div class="" style="position:absolute;left:127.00px;top:66.80px;width:1.00px;height:15.00px;background:#cfcfcf;"></div>
<div class="" style="position:absolute;left:131.30px;top:66.60px;width:31.40px;height:15.00px;box-sizing:border-box;background:#fff;border:1px solid #8f80f5;border-radius:2.5px;"></div>
<svg style="position:absolute;left:136.8px;top:71px" width="7" height="7" viewBox="0 0 14 14" fill="none" stroke="#444" stroke-width="1.300" stroke-linecap="round"><path d="M2.500 1v12M7 1v12M11.500 1v12"/><path d="M1 9h3M5.500 4.500h3M10 8h3" stroke-width="1.600"/></svg>
<span class="t" id="t116" style="top:72.03px;left:146.40px;font-size:6.74px;font-weight:500;color:#333;">필터</span>
<div class="" style="position:absolute;left:165.20px;top:66.60px;width:37.30px;height:15.00px;box-sizing:border-box;background:#fff;border:1px solid #8f80f5;border-radius:2.5px;"></div>
<svg style="position:absolute;left:170.8px;top:70.900px" width="7.400" height="7.400" viewBox="0 0 16 16" fill="none" stroke="#444" stroke-width="1.500" stroke-linejoin="round"><path d="M8 2l6 3-6 3-6-3z"/><path d="M2 8.200l6 3 6-3M2 11l6 3 6-3"/></svg>
<span class="t" id="t117" style="top:72.24px;left:179.50px;font-size:6.82px;font-weight:500;color:#333;">그룹화</span>
<div class="" style="position:absolute;left:205.00px;top:66.60px;width:32.10px;height:15.00px;box-sizing:border-box;background:#efedfb;border:1px solid #d3cdf6;border-radius:2.5px;"></div>
<svg style="position:absolute;left:210.600px;top:71.600px" width="7.600" height="6" viewBox="0 0 16 12" fill="none" stroke="#555" stroke-width="1.400"><path d="M1 6c2-3.300 4.300-5 7-5s5 1.700 7 5c-2 3.300-4.300 5-7 5S3 9.300 1 6z"/><circle cx="8" cy="6" r="2.200"/></svg>
<span class="t" id="t118" style="top:72.03px;left:219.60px;font-size:6.74px;font-weight:700;color:#222;">숨김</span>
<div class="" style="position:absolute;left:235.90px;top:56.30px;width:11.60px;height:11.60px;background:#f4101b;border-radius:50%;"></div><span class="t" id="t119" style="top:58.85px;left:241.70px;transform:translateX(-50%);font-size:7.40px;font-weight:700;color:#fff;">1</span>
<div class="" style="position:absolute;left:532.50px;top:63.10px;width:125.60px;height:22.90px;box-sizing:border-box;background:#fff;border:1.4px solid #5a3ff0;border-radius:1.5px;box-shadow:0 1.5px 3.5px rgba(0,0,0,.4);"></div>
<div class="" style="position:absolute;left:536.50px;top:71.60px;width:7.00px;height:7.00px;box-sizing:border-box;background:#fff;border:0.9px solid #d0d0d0;border-radius:1.8px;"></div>
<span class="t" id="t120" style="top:73.12px;left:547.00px;font-size:5.87px;font-weight:400;color:#4a4a4a;">모두 접기</span>
<div class="" style="position:absolute;left:575.40px;top:67.90px;width:14.70px;height:14.70px;box-sizing:border-box;background:#fff;border:0.9px solid #8c8c8c;border-radius:50%;"></div>
<svg style="position:absolute;left:579.4px;top:71.8px" width="7.2" height="7.2" viewBox="0 0 14 14" fill="none" stroke="#222" stroke-width="2.2" stroke-linecap="round"><circle cx="5.6" cy="5.6" r="4"/><path d="M8.8 8.8l3.8 3.8"/></svg>
<div class="" style="position:absolute;left:594.20px;top:67.90px;width:34.20px;height:14.60px;background:#5638e6;border-radius:2px 0 0 2px;"></div>
<div class="" style="position:absolute;left:628.40px;top:67.90px;width:8.20px;height:14.60px;background:#3a2aa4;border-radius:0 2px 2px 0;"></div>
<span class="t" id="t121" style="top:72.19px;left:599.20px;font-size:6.02px;font-weight:500;color:#fff;">업무 추가</span>
<svg style="position:absolute;left:630.4px;top:74.0px" width="4.4" height="3" viewBox="0 0 12 8" fill="none" stroke="#fff" stroke-width="2.2" stroke-linecap="round" stroke-linejoin="round"><path d="M1.5 1.5L6 6l4.5-4.500"/></svg>
<div class="" style="position:absolute;left:641.10px;top:67.80px;width:14.50px;height:14.80px;box-sizing:border-box;background:#fff;border:0.9px solid #c8c8c8;border-radius:2.5px;"></div>
<svg style="position:absolute;left:644.3px;top:71.1px" width="8" height="8" viewBox="0 0 16 16"><path d="M6.80 0.90L9.20 0.90L9.81 3.13L11.31 3.99L13.55 3.41L14.75 5.49L13.13 7.13L13.13 8.87L14.75 10.51L13.55 12.59L11.31 12.01L9.81 12.87L9.20 15.10L6.80 15.10L6.19 12.87L4.69 12.01L2.45 12.59L1.25 10.51L2.87 8.87L2.87 7.13L1.25 5.49L2.45 3.41L4.69 3.99L6.19 3.13Z" fill="none" stroke="#111" stroke-width="2.3" stroke-linejoin="round"/><circle cx="8" cy="8" r="2.300" fill="none" stroke="#111" stroke-width="1.900"/></svg>
<div class="" style="position:absolute;left:651.40px;top:57.80px;width:11.60px;height:11.60px;background:#f4101b;border-radius:50%;"></div><span class="t" id="t122" style="top:60.10px;left:657.20px;transform:translateX(-50%);font-size:7.40px;font-weight:700;color:#fff;">4</span>
<div class="" style="position:absolute;left:11.00px;top:90.00px;width:461.10px;height:22.70px;box-sizing:border-box;background:#fff;border:1.4px solid #5a3ff0;border-radius:3.0px;box-shadow:0 1.5px 3.5px rgba(0,0,0,.4);"></div>
<div class="" style="position:absolute;left:153.40px;top:91.50px;width:0.70px;height:19.20px;background:#e4e4e4;"></div>
<div class="" style="position:absolute;left:205.40px;top:91.50px;width:0.70px;height:19.20px;background:#e4e4e4;"></div>
<div class="" style="position:absolute;left:323.10px;top:91.50px;width:0.70px;height:19.20px;background:#e4e4e4;"></div>
<div class="" style="position:absolute;left:378.60px;top:91.50px;width:0.70px;height:19.20px;background:#e4e4e4;"></div>
<div class="" style="position:absolute;left:431.50px;top:91.50px;width:0.70px;height:19.20px;background:#e4e4e4;"></div>
<span class="t" id="t123" style="top:98.05px;left:70.90px;transform:translateX(-50%);font-size:7.20px;font-weight:500;color:#333;">업무명</span>
<span class="t" id="t124" style="top:98.05px;left:179.20px;transform:translateX(-50%);font-size:7.20px;font-weight:500;color:#333;">담당자</span>
<span class="t" id="t125" style="top:98.05px;left:264.50px;transform:translateX(-50%);font-size:7.20px;font-weight:500;color:#333;">상태</span>
<span class="t" id="t126" style="top:98.05px;left:351.00px;transform:translateX(-50%);font-size:7.20px;font-weight:500;color:#333;">시작일</span>
<span class="t" id="t127" style="top:98.05px;left:405.00px;transform:translateX(-50%);font-size:7.20px;font-weight:500;color:#333;">마감일</span>
<span class="t" id="t128" style="top:98.05px;left:451.40px;transform:translateX(-50%);font-size:7.20px;font-weight:500;color:#333;">우선순위</span>
<div class="" style="position:absolute;left:465.20px;top:85.10px;width:11.60px;height:11.60px;background:#f4101b;border-radius:50%;"></div><span class="t" id="t129" style="top:88.15px;left:471.00px;transform:translateX(-50%);font-size:7.40px;font-weight:700;color:#fff;">2</span>
<div class="" style="position:absolute;left:11.95px;top:119.70px;width:193.95px;height:252.15px;box-sizing:border-box;background:#fff;border:1.4px solid #5a3ff0;border-radius:1.5px;box-shadow:0 1.5px 3.5px rgba(0,0,0,.4);"></div>
<div class="" style="position:absolute;left:19.20px;top:139.93px;width:185.00px;height:0.80px;background:#f0f0f0;"></div>
<div class="" style="position:absolute;left:19.20px;top:160.99px;width:185.00px;height:0.80px;background:#f0f0f0;"></div>
<div class="" style="position:absolute;left:19.20px;top:182.05px;width:185.00px;height:0.80px;background:#f0f0f0;"></div>
<div class="" style="position:absolute;left:19.20px;top:203.11px;width:185.00px;height:0.80px;background:#f0f0f0;"></div>
<div class="" style="position:absolute;left:19.20px;top:224.17px;width:185.00px;height:0.80px;background:#f0f0f0;"></div>
<div class="" style="position:absolute;left:19.20px;top:245.23px;width:185.00px;height:0.80px;background:#f0f0f0;"></div>
<div class="" style="position:absolute;left:19.20px;top:266.29px;width:185.00px;height:0.80px;background:#f0f0f0;"></div>
<div class="" style="position:absolute;left:19.20px;top:287.35px;width:185.00px;height:0.80px;background:#f0f0f0;"></div>
<div class="" style="position:absolute;left:19.20px;top:308.41px;width:185.00px;height:0.80px;background:#f0f0f0;"></div>
<div class="" style="position:absolute;left:19.20px;top:329.47px;width:185.00px;height:0.80px;background:#f0f0f0;"></div>
<div class="" style="position:absolute;left:19.20px;top:350.53px;width:185.00px;height:0.80px;background:#f0f0f0;"></div>
<div class="" style="position:absolute;left:24.20px;top:125.70px;width:8.70px;height:8.60px;box-sizing:border-box;border:0.9px solid #b9b9b9;border-radius:2.4px;background:#fff;"></div><div class="" style="position:absolute;left:26.50px;top:129.45px;width:4.20px;height:1.10px;background:#3a3a3a;"></div>
<svg style="position:absolute;left:35.9px;top:127.60px" width="7.4" height="6.4" viewBox="0 0 15 13"><path d="M1.200 1.500Q1.200.600 2.300.600L12.700.600Q13.800.600 13.800 1.700L13.800 6.500Q13.800 7.500 13 8.200L9 12Q7.800 13 6.600 12L1.800 7.600Q1.200 7 1.200 6z" fill="#f4b632"/><path d="M2.200 6.500l3 3-1.300 1.300-2.300-2.200z" fill="#e8607a"/></svg>
<span class="t" id="t130" style="top:126.15px;left:46.60px;font-size:7.40px;font-weight:500;color:#303030;">[교환] 교환 및 재배송 / 7월 이슈 대응</span>
<span class="t" id="t131" style="top:125.86px;left:162.60px;font-size:6.98px;font-weight:400;letter-spacing:-0.111px;color:#444;">(4)</span>
<span class="t" id="t132" style="top:148.20px;left:45.20px;font-size:7.41px;font-weight:400;color:#9a9a9a;text-decoration:line-through;text-decoration-thickness:0.6px;">[교환] 7월 교환/재배송 출고 준비</span>
<span class="t" id="t133" style="top:167.82px;left:45.20px;font-size:7.31px;font-weight:500;color:#303030;">[포장개선] 콜드브루 시럽 박스 재질 변경 적용</span>
<span class="t" id="t134" style="top:188.87px;left:45.20px;font-size:7.33px;font-weight:400;color:#9a9a9a;text-decoration:line-through;text-decoration-thickness:0.6px;">[교환] 불량품 회수 여부 및 일정 확인</span>
<span class="t" id="t135" style="top:209.91px;left:45.20px;font-size:7.36px;font-weight:500;color:#303030;">[확인요청] 지점별 수령 확인 및 피드백 수집</span>
<svg style="position:absolute;left:35.900px;top:233.80px" width="7.600" height="5.600" viewBox="0 0 15 11"><path d="M5.500 1l2 .300L8.500 5l3-1.500 2 .500L14 7H1.500L1 5l3-.500z" fill="#d63a3a"/><path d="M4 4.500l3 .200V7H3z" fill="#3a4ec0"/><circle cx="3.300" cy="8.300" r="2" fill="#2a2a5a"/><circle cx="11.800" cy="8.300" r="2" fill="#2a2a5a"/></svg>
<span class="t" id="t136" style="top:230.98px;left:46.60px;font-size:7.35px;font-weight:500;color:#303030;">[배송] 직배송 요청 / 7월 B지점</span>
<div class="" style="position:absolute;left:24.20px;top:252.06px;width:8.70px;height:8.60px;box-sizing:border-box;border:0.9px solid #b9b9b9;border-radius:2.4px;background:#fff;"></div><div class="" style="position:absolute;left:26.50px;top:255.81px;width:4.20px;height:1.10px;background:#3a3a3a;"></div>
<svg style="position:absolute;left:36px;top:253.16px" width="6.500" height="6.500" viewBox="0 0 13 13"><rect x="1" y="1" width="11" height="2.200" fill="#b7b3d9"/><rect x="1" y="5" width="11" height="2.200" fill="#c9c6e2"/><rect x="2.500" y="9" width="8" height="2.200" fill="#c9c6e2"/></svg>
<div class="" style="position:absolute;left:35.50px;top:256.56px;width:11.00px;height:0.60px;background:#a5a5a5;"></div>
<span class="t" id="t137" style="top:252.98px;left:46.40px;font-size:7.46px;font-weight:400;color:#9a9a9a;text-decoration:line-through;text-decoration-thickness:0.6px;">[계약] 계약/비용정산</span>
<span class="t" id="t138" style="top:252.22px;left:112.60px;font-size:6.98px;font-weight:400;letter-spacing:-0.044px;color:#444;">(5)</span>
<span class="t" id="t139" style="top:274.11px;left:45.30px;font-size:7.32px;font-weight:400;color:#9a9a9a;text-decoration:line-through;text-decoration-thickness:0.6px;">[계약] 신규 계약서</span>
<span class="t" id="t140" style="top:295.15px;left:45.30px;font-size:7.36px;font-weight:400;color:#9a9a9a;text-decoration:line-through;text-decoration-thickness:0.6px;">[정산] 세금계산서 발행</span>
<span class="t" id="t141" style="top:316.21px;left:45.30px;font-size:7.36px;font-weight:500;color:#303030;">[입금] 미수금 입금요청</span>
<span class="t" id="t142" style="top:337.04px;left:45.30px;font-size:7.32px;font-weight:500;color:#303030;">[계약] 재갱신 협의</span>
<span class="t" id="t143" style="top:358.09px;left:45.30px;font-size:7.35px;font-weight:500;color:#303030;">[정산] 비용 내역 공유</span>
<div class="" style="position:absolute;left:200.10px;top:114.00px;width:11.60px;height:11.60px;background:#f4101b;border-radius:50%;"></div><span class="t" id="t144" style="top:116.30px;left:205.90px;transform:translateX(-50%);font-size:7.40px;font-weight:700;color:#fff;">3</span>
</div>
</body></html>
